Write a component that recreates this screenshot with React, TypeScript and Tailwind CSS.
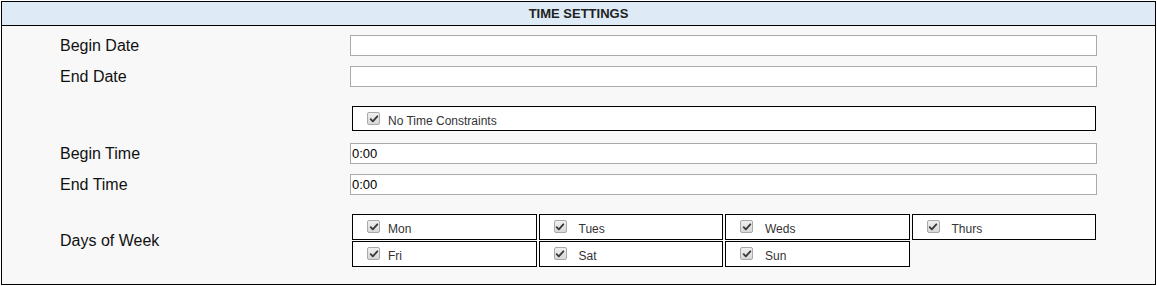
import React from 'react';

const days = ['Mon', 'Tues', 'Weds', 'Thurs', 'Fri', 'Sat', 'Sun'];

function Check() {
    return (
        <span className="w-[13px] h-[13px] shrink-0 border border-[#a9a9a9] rounded-[2px] bg-gradient-to-b from-[#f0f0f0] to-[#d8d8d8] flex items-center justify-center">
            <svg viewBox="0 0 12 12" className="w-[10px] h-[10px]">
                <path d="M2 6.2 L4.6 8.8 L10 2.8" fill="none" stroke="#3a3a3a" strokeWidth="2.2" strokeLinecap="round" strokeLinejoin="round" />
            </svg>
        </span>
    );
}

function CheckBox({ label, className, wide }: { label: string; className?: string; wide?: boolean }) {
    return (
        <div className={`border border-black bg-white flex items-start pl-[14px] ${className ?? ''}`}>
            <span className="mt-[5px]"><Check /></span>
            <span className={`${wide ? 'ml-[12px]' : 'ml-[8px]'} mt-[7px] text-[12px] leading-[14px] text-[#333]`}>{label}</span>
        </div>
    );
}

function Row({ label, children, className }: { label: string; children: React.ReactNode; className?: string }) {
    return (
        <div className={`flex items-center ${className ?? ''}`}>
            <div className="w-[290px] text-[16px] leading-[18px] text-[#111]">{label}</div>
            <div className="w-[747px]">{children}</div>
        </div>
    );
}

export default function App() {
    return (
        <div className="p-[1px] font-['Liberation_Sans',Arial,sans-serif]">
            <div className="w-[1155px] h-[284px] border border-black bg-[#f8f8f8]">
                <div className="h-[24px] bg-[#deeaf6] border-b border-black flex items-center justify-center text-[13px] font-bold text-[#222]">
                    TIME SETTINGS
                </div>
                <div className="pl-[58px] flex flex-col">
                    <Row label="Begin Date" className="mt-[9px]">
                        <div className="h-[21px] border border-[#aaa] bg-white" />
                    </Row>
                    <Row label="End Date" className="mt-[10px]">
                        <div className="h-[21px] border border-[#aaa] bg-white" />
                    </Row>
                    <Row label="" className="mt-[19px]">
                        <CheckBox label="No Time Constraints" className="ml-[2px] w-[744px] h-[25px]" />
                    </Row>
                    <Row label="Begin Time" className="mt-[12px]">
                        <div className="h-[21px] border border-[#aaa] bg-white pl-[1px] text-[13px] leading-[19px] text-black">0:00</div>
                    </Row>
                    <Row label="End Time" className="mt-[10px]">
                        <div className="h-[21px] border border-[#aaa] bg-white pl-[1px] text-[13px] leading-[19px] text-black">0:00</div>
                    </Row>
                    <Row label="Days of Week" className="mt-[19px]">
                        <div className="ml-[2px] w-[744px] grid grid-cols-4 gap-x-[2px] gap-y-[1px]">
                            {days.map((d, i) => (
                                <CheckBox key={d} label={d} wide={i % 4 !== 0} className="h-[26px]" />
                            ))}
                        </div>
                    </Row>
                </div>
            </div>
        </div>
    );
}
